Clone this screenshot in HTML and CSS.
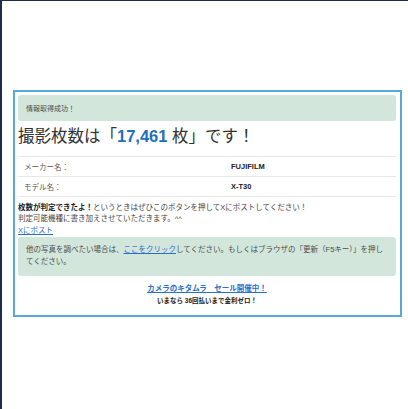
FILE: index.html
```html
<!DOCTYPE html>
<html lang="ja">
<head>
<meta charset="utf-8">
<title>撮影枚数</title>
<link rel="stylesheet" href="styles.css">
</head>
<body>
<div class="page">
  <div class="card">
    <div class="alert alert-top">情報取得成功！</div>
    <h2 class="count">撮影枚数は「<span class="num">17,461</span> 枚」です！</h2>
    <table class="info">
      <tr><td class="label">メーカー名：</td><td class="value">FUJIFILM</td></tr>
      <tr><td class="label">モデル名：</td><td class="value">X-T30</td></tr>
    </table>
    <p class="note"><b>枚数が判定できたよ！</b>というときはぜひこのボタンを押してXにポストしてください！<br>判定可能機種に書き加えさせていただきます。^^<br><a href="#" class="link">Xにポスト</a></p>
    <div class="alert alert-bottom">他の写真を調べたい場合は、<a href="#" class="link">ここをクリック</a>してください。もしくはブラウザの「更新（F5キー）」を押してください。</div>
    <div class="promo">
      <a href="#" class="promo-link">カメラのキタムラ　セール開催中！</a>
      <div class="promo-sub">いまなら 36回払いまで金利ゼロ！</div>
    </div>
  </div>
</div>
</body>
</html>
```

FILE: styles.css
```css
html, body {
  margin: 0;
  padding: 0;
}
body {
  width: 408px;
  height: 409px;
  box-sizing: border-box;
  border-left: 2px solid #1f2a4c;
  border-top: 1px solid #1f2a4c;
  background: #fff;
  font-family: "Liberation Sans", "Noto Sans CJK JP", sans-serif;
  color: #444;
  overflow: hidden;
}
.page {
  padding: 89px 0 0 11px;
}
.card {
  width: 389px;
  box-sizing: border-box;
  border: 2px solid #58a9d8;
  padding: 3px 4px 9px 3px;
}
.alert {
  background: #d2e6dc;
  border-radius: 3px;
  font-size: 7.5px;
  color: #4a4f4c;
}
.alert-top {
  height: 26px;
  box-sizing: border-box;
  padding: 0 8px;
  display: flex;
  align-items: center;
  font-size: 7px;
}
.count {
  margin: 4px 0 0 0;
  font-size: 16.5px;
  line-height: 22px;
  font-weight: normal;
  color: #333;
}
.num {
  color: #1f6fbe;
  font-weight: bold;
}
.info {
  margin-top: 9px;
  width: 100%;
  border-collapse: collapse;
  font-size: 7.5px;
}
.info td {
  height: 20px;
  box-sizing: border-box;
  padding: 0 6px;
  border-top: 1px solid #e6e9e8;
  border-bottom: 1px solid #e6e9e8;
}
.info .label {
  width: 207px;
  color: #555;
}
.info .value {
  font-weight: bold;
  color: #222;
}
.note {
  margin: 5px 0 0 0;
  font-size: 7.5px;
  line-height: 11.3px;
  color: #444;
}
.note b {
  color: #222;
}
.link {
  color: #2a6fc9;
  text-decoration: underline;
}
.alert-bottom {
  margin-top: 1px;
  padding: 7px 8px 8px 8px;
  line-height: 12px;
}
.promo {
  text-align: center;
  margin-top: 7px;
}
.promo-link {
  display: block;
  color: #2a6fc9;
  font-weight: bold;
  font-size: 7.5px;
  line-height: 11px;
  text-decoration: underline;
}
.promo-sub {
  margin-top: 2px;
  font-size: 6.5px;
  line-height: 10px;
  font-weight: bold;
  color: #222;
}
```
